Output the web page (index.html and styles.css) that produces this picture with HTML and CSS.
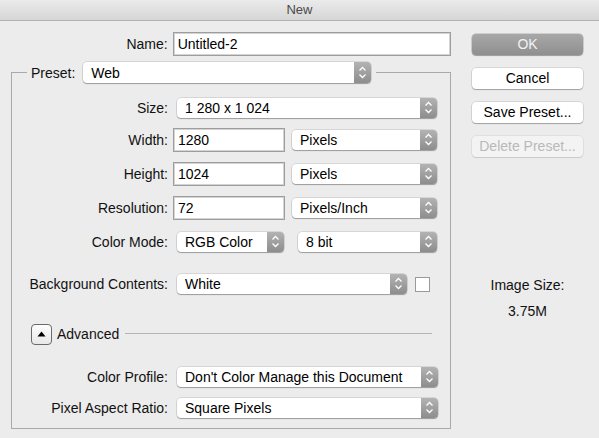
FILE: index.html
```html
<!DOCTYPE html>
<html>
<head>
<meta charset="utf-8">
<link rel="stylesheet" href="styles.css">
</head>
<body>
<div class="titlebar">New</div>
<div class="dialog">
  <div class="main">
    <div class="row name-row">
      <span class="lbl">Name:</span>
      <div class="field field-name">Untitled-2</div>
    </div>
    <fieldset class="group">
      <legend class="legend">
        <div class="legend-inner">
          <span class="legend-label">Preset:</span>
          <div class="popup popup-preset"><span class="ptext">Web</span><span class="arrow"><svg width="17" height="21" viewBox="0 0 17 21"><path d="M5.5 8.5 L8.5 5.5 L11.5 8.5 M5.5 12.5 L8.5 15.5 L11.5 12.5" fill="none" stroke="#fff" stroke-width="1.3"/></svg></span></div>
        </div>
      </legend>
      <div class="row r-size">
        <span class="lbl">Size:</span>
        <div class="popup popup-size"><span class="ptext">1 280 x 1 024</span><span class="arrow"><svg width="17" height="21" viewBox="0 0 17 21"><path d="M5.5 8.5 L8.5 5.5 L11.5 8.5 M5.5 12.5 L8.5 15.5 L11.5 12.5" fill="none" stroke="#fff" stroke-width="1.3"/></svg></span></div>
      </div>
      <div class="row r-width">
        <span class="lbl">Width:</span>
        <div class="field field-num">1280</div>
        <div class="popup popup-unit"><span class="ptext">Pixels</span><span class="arrow"><svg width="17" height="21" viewBox="0 0 17 21"><path d="M5.5 8.5 L8.5 5.5 L11.5 8.5 M5.5 12.5 L8.5 15.5 L11.5 12.5" fill="none" stroke="#fff" stroke-width="1.3"/></svg></span></div>
      </div>
      <div class="row r-std">
        <span class="lbl">Height:</span>
        <div class="field field-num">1024</div>
        <div class="popup popup-unit"><span class="ptext">Pixels</span><span class="arrow"><svg width="17" height="21" viewBox="0 0 17 21"><path d="M5.5 8.5 L8.5 5.5 L11.5 8.5 M5.5 12.5 L8.5 15.5 L11.5 12.5" fill="none" stroke="#fff" stroke-width="1.3"/></svg></span></div>
      </div>
      <div class="row r-std">
        <span class="lbl">Resolution:</span>
        <div class="field field-num">72</div>
        <div class="popup popup-unit"><span class="ptext">Pixels/Inch</span><span class="arrow"><svg width="17" height="21" viewBox="0 0 17 21"><path d="M5.5 8.5 L8.5 5.5 L11.5 8.5 M5.5 12.5 L8.5 15.5 L11.5 12.5" fill="none" stroke="#fff" stroke-width="1.3"/></svg></span></div>
      </div>
      <div class="row r-std">
        <span class="lbl">Color Mode:</span>
        <div class="popup popup-mode"><span class="ptext">RGB Color</span><span class="arrow"><svg width="17" height="21" viewBox="0 0 17 21"><path d="M5.5 8.5 L8.5 5.5 L11.5 8.5 M5.5 12.5 L8.5 15.5 L11.5 12.5" fill="none" stroke="#fff" stroke-width="1.3"/></svg></span></div>
        <div class="popup popup-bits"><span class="ptext">8 bit</span><span class="arrow"><svg width="17" height="21" viewBox="0 0 17 21"><path d="M5.5 8.5 L8.5 5.5 L11.5 8.5 M5.5 12.5 L8.5 15.5 L11.5 12.5" fill="none" stroke="#fff" stroke-width="1.3"/></svg></span></div>
      </div>
      <div class="row r-bg">
        <span class="lbl">Background Contents:</span>
        <div class="popup popup-bg"><span class="ptext">White</span><span class="arrow"><svg width="17" height="21" viewBox="0 0 17 21"><path d="M5.5 8.5 L8.5 5.5 L11.5 8.5 M5.5 12.5 L8.5 15.5 L11.5 12.5" fill="none" stroke="#fff" stroke-width="1.3"/></svg></span></div>
        <div class="swatch"></div>
      </div>
      <div class="row r-adv">
        <div class="disclose"><svg width="9" height="6" viewBox="0 0 9 6"><path d="M0.5 5.5 L4.5 0.5 L8.5 5.5 Z" fill="#000"/></svg></div>
        <span class="adv-label">Advanced</span>
        <div class="adv-line"></div>
      </div>
      <div class="row r-profile">
        <span class="lbl">Color Profile:</span>
        <div class="popup popup-wide"><span class="ptext">Don't Color Manage this Document</span><span class="arrow"><svg width="17" height="21" viewBox="0 0 17 21"><path d="M5.5 8.5 L8.5 5.5 L11.5 8.5 M5.5 12.5 L8.5 15.5 L11.5 12.5" fill="none" stroke="#fff" stroke-width="1.3"/></svg></span></div>
      </div>
      <div class="row r-ratio">
        <span class="lbl">Pixel Aspect Ratio:</span>
        <div class="popup popup-wide"><span class="ptext">Square Pixels</span><span class="arrow"><svg width="17" height="21" viewBox="0 0 17 21"><path d="M5.5 8.5 L8.5 5.5 L11.5 8.5 M5.5 12.5 L8.5 15.5 L11.5 12.5" fill="none" stroke="#fff" stroke-width="1.3"/></svg></span></div>
      </div>
    </fieldset>
  </div>
  <div class="side">
    <div class="btn btn-default">OK</div>
    <div class="btn">Cancel</div>
    <div class="btn">Save Preset...</div>
    <div class="btn btn-disabled">Delete Preset...</div>
    <div class="imgsize">
      <div class="imgsize-label">Image Size:</div>
      <div class="imgsize-value">3.75M</div>
    </div>
  </div>
</div>
</body>
</html>
```
FILE: styles.css
```css
* { box-sizing: border-box; }
html, body { margin: 0; padding: 0; }
body {
  width: 599px;
  height: 438px;
  overflow: hidden;
  background: #ececec;
  font-family: "Liberation Sans", Arial, sans-serif;
  font-size: 14px;
  color: #111;
}
.titlebar {
  height: 21px;
  line-height: 20px;
  text-align: center;
  font-size: 13px;
  color: #4a4a4a;
  background: linear-gradient(#ebebeb, #d6d6d6);
  border-bottom: 1px solid #b3b3b3;
}
.dialog {
  display: flex;
}
.main {
  width: 451px;
  padding: 11px 0 0 11px;
}
.row {
  display: flex;
  align-items: center;
  height: 24px;
}
.lbl {
  width: 156px;
  text-align: right;
  margin-right: 5px;
  white-space: nowrap;
}
.name-row { margin-left: 1px; }
.field {
  height: 24px;
  background: #fff;
  border: 1px solid #9d9d9d;
  box-shadow: inset 0 0 0 1px #d4d4d4;
  padding: 0 0 0 4px;
  line-height: 22px;
  color: #000;
}
.field-name { width: 279px; }
.field-num { width: 112px; }

.group {
  margin: 6px 0 0 0;
  width: 440px;
  min-width: 0;
  padding: 0 0 8px 0;
  border: 1px solid #a9a9a9;
}
.legend {
  margin-left: 15px;
  padding: 0 5px 0 4px;
}
.legend-inner {
  display: flex;
  align-items: center;
  height: 21px;
}
.legend-label { margin-right: 8px; }

.popup {
  display: flex;
  align-items: center;
  height: 20px;
  background: #fff;
  border-radius: 4px;
  box-shadow: 0 0 0 0.5px rgba(0,0,0,0.18), 0 1px 1px rgba(0,0,0,0.28);
  overflow: hidden;
  color: #000;
}
.ptext {
  flex: 1;
  padding-left: 8px;
  white-space: nowrap;
  overflow: hidden;
}
.arrow {
  width: 17px;
  height: 20px;
  flex: none;
  display: flex;
  align-items: center;
  justify-content: center;
  background: linear-gradient(#b3b3b3, #8d8d8d);
}
.arrow svg { display: block; margin-top: -1px; }
.popup-preset { width: 288px; height: 21px; }
.popup-preset .arrow { height: 21px; }
.popup-size { width: 260px; margin-left: 4px; }
.popup-unit { width: 145px; margin-left: 7px; }
.popup-mode { width: 107px; margin-left: 4px; }
.popup-bits { width: 139px; margin-left: 14px; }
.popup-bg { width: 230px; margin-left: 4px; }
.popup-wide { width: 261px; margin-left: 4px; }

.swatch {
  width: 15px;
  height: 15px;
  margin-left: 8px;
  background: #fff;
  border: 1px solid #9a9a9a;
}

.r-size { margin-top: 13px; }
.r-width { margin-top: 8px; }
.r-std { margin-top: 10px; }
.r-bg { margin-top: 18px; }
.r-adv { margin-top: 26px; height: 24px; }
.r-profile { margin-top: 19px; }
.r-ratio { margin-top: 7px; }

.disclose {
  width: 21px;
  height: 21px;
  margin-left: 19px;
  border: 1px solid #6b6b6b;
  border-radius: 4px;
  background: linear-gradient(#fdfdfd, #e8e8e8);
  display: flex;
  align-items: center;
  justify-content: center;
}
.disclose svg { display: block; margin-top: -1px; }
.adv-label { margin-left: 5px; }
.adv-line {
  width: 307px;
  height: 1px;
  margin-left: 6px;
  margin-top: -1px;
  background: #b4b4b4;
}

.side {
  width: 111px;
  margin-left: 21px;
  padding-top: 13px;
}
.btn {
  height: 21px;
  line-height: 21px;
  margin-bottom: 13px;
  text-align: center;
  background: #fff;
  border-radius: 4px;
  box-shadow: 0 0 0 0.5px rgba(0,0,0,0.18), 0 1px 1px rgba(0,0,0,0.25);
  color: #000;
}
.btn-default {
  background: linear-gradient(#a8a8a8, #8f8f8f);
  color: #f2f2f2;
  box-shadow: 0 0 0 0.5px rgba(0,0,0,0.25), 0 1px 1px rgba(0,0,0,0.25);
}
.btn-disabled {
  background: #f3f3f3;
  color: #b9b9b9;
  box-shadow: 0 0 0 0.5px rgba(0,0,0,0.1), 0 1px 1px rgba(0,0,0,0.1);
}
.imgsize {
  margin-top: 120px;
  text-align: center;
}
.imgsize-label { line-height: 16px; }
.imgsize-value { line-height: 16px; margin-top: 10px; }
```
